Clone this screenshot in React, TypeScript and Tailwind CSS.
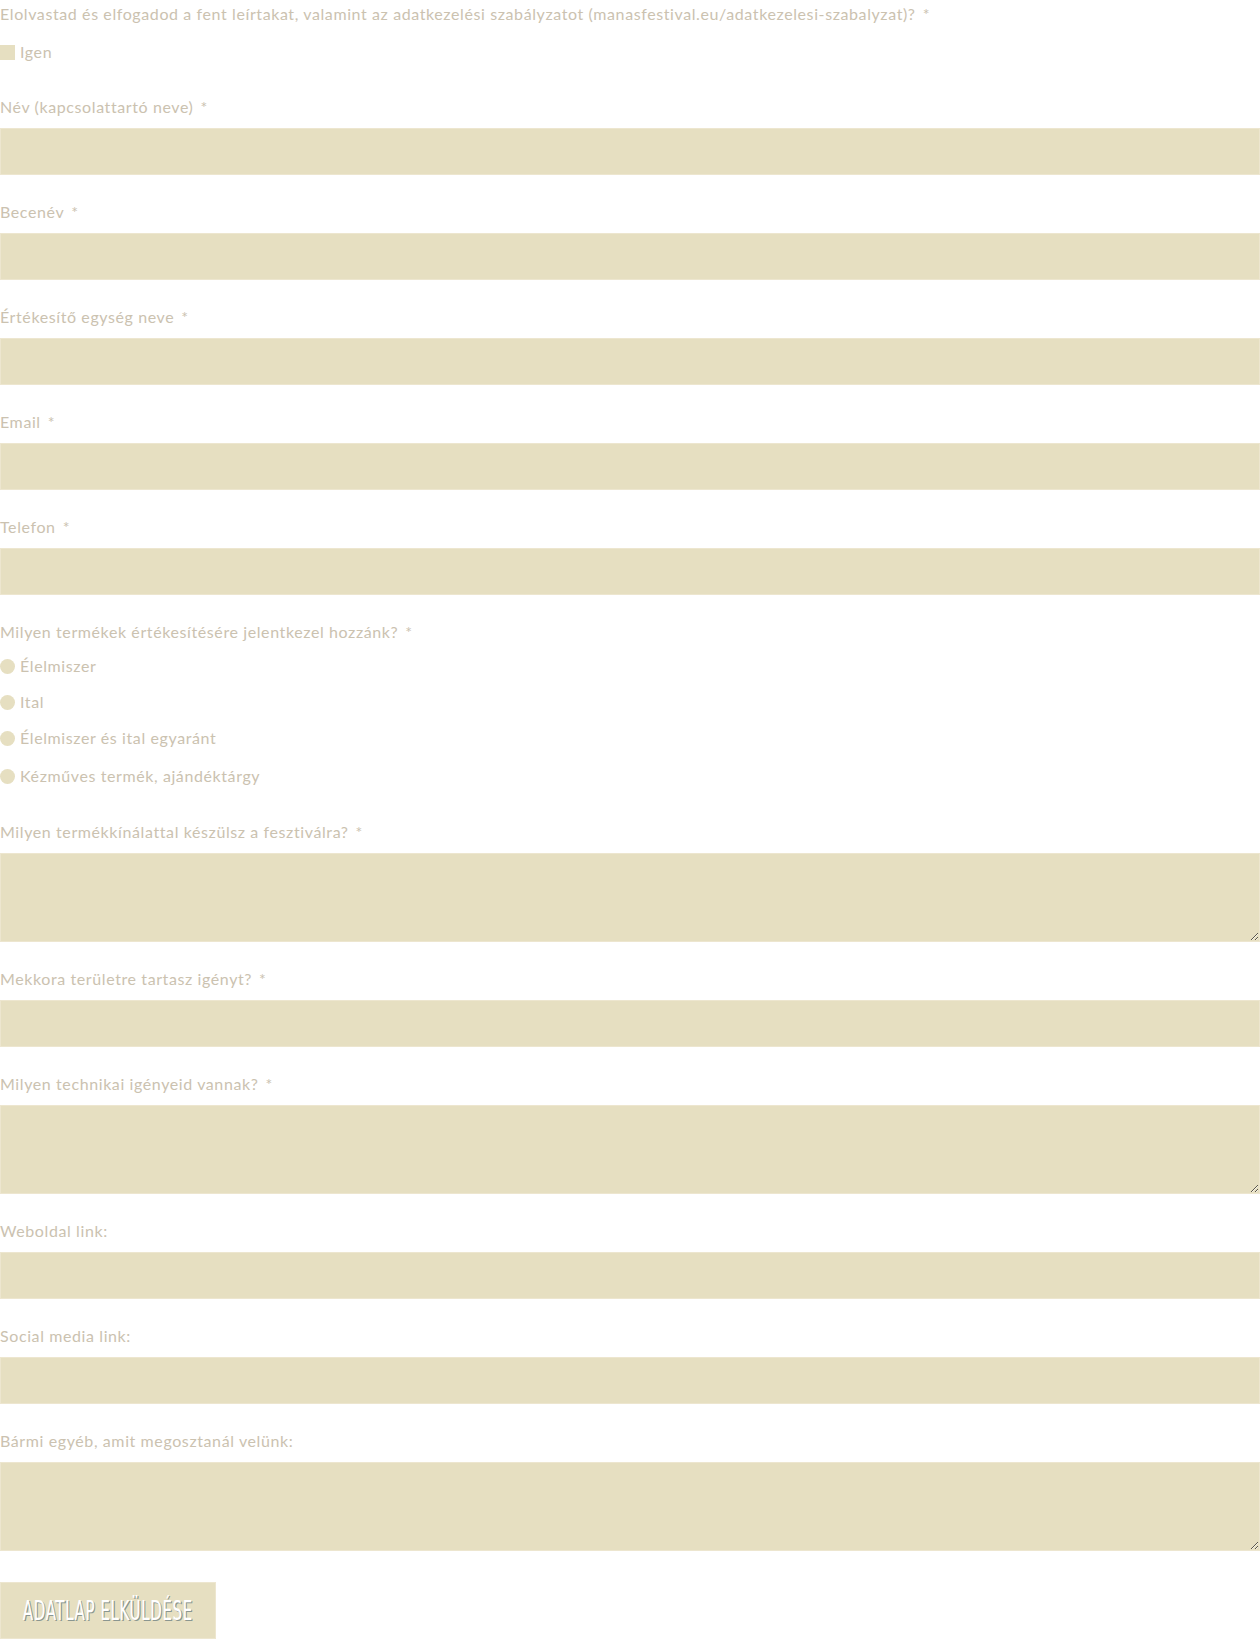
import React from "react";

const labelCls = "block h-[24px] leading-[24px] mb-[9px]";
const inputCls =
  "block w-full h-[47px] border border-[#ede6cf] bg-[#e6dfc1] outline-none";
const areaCls =
  "block w-full h-[89px] border border-[#ede6cf] bg-[#e6dfc1] outline-none";

function Req() {
  return <span className="ml-[7px]">*</span>;
}

function Field({
  label,
  required,
  area,
}: {
  label: string;
  required?: boolean;
  area?: boolean;
}) {
  return (
    <div className="mb-[25px]">
      <label className={labelCls}>
        {label}
        {required && <Req />}
      </label>
      {area ? <textarea className={areaCls} /> : <input className={inputCls} />}
    </div>
  );
}

const options = [
  "Élelmiszer",
  "Ital",
  "Élelmiszer és ital egyaránt",
  "Kézműves termék, ajándéktárgy",
];

export default function App() {
  return (
    <div
      className="w-[1260px] bg-white pt-[2px] text-[16px] tracking-[0.6px] text-[#cbc2b0]"
      style={{ fontFamily: "Lato, 'Open Sans', sans-serif" }}
    >
      <div className="h-[24px] leading-[24px] whitespace-nowrap">
        Elolvastad és elfogadod a fent leírtakat, valamint az adatkezelési
        szabályzatot (manasfestival.eu/adatkezelesi-szabalyzat)?
        <Req />
      </div>
      <div className="mt-[14px] flex h-[24px] items-center gap-[5px]">
        <span className="block h-[15px] w-[15px] bg-[#e6dfc1]" />
        <span>Igen</span>
      </div>

      <div className="mt-[31px]">
        <Field label="Név (kapcsolattartó neve)" required />
        <Field label="Becenév" required />
        <Field label="Értékesítő egység neve" required />
        <Field label="Email" required />
        <Field label="Telefon" required />

        <div className="mb-[32px]">
          <div className="h-[24px] leading-[24px]">
            Milyen termékek értékesítésére jelentkezel hozzánk?
            <Req />
          </div>
          <div className="mt-[10px] flex flex-col gap-[12px]">
            {options.map((o, i) => (
              <div
                key={o}
                className={
                  i === options.length - 1
                    ? "mt-[2px] flex h-[24px] items-center gap-[5px]"
                    : "flex h-[24px] items-center gap-[5px]"
                }
              >
                <span className="block h-[15px] w-[15px] rounded-full bg-[#e6dfc1]" />
                <span>{o}</span>
              </div>
            ))}
          </div>
        </div>

        <Field label="Milyen termékkínálattal készülsz a fesztiválra?" required area />
        <Field label="Mekkora területre tartasz igényt?" required />
        <Field label="Milyen technikai igényeid vannak?" required area />
        <Field label="Weboldal link:" />
        <Field label="Social media link:" />
        <Field label="Bármi egyéb, amit megosztanál velünk:" area />
      </div>

      <button className="mt-[31px] flex h-[57px] w-[216px] items-center justify-center overflow-hidden border border-[#ede6cf] bg-[#e6dfc1]">
        <span
          className="inline-block scale-x-[0.56] whitespace-nowrap text-[27px] leading-none tracking-[1px] text-white [text-shadow:2px_1px_0_#8a9690]"
          style={{ fontFamily: "'DejaVu Sans', sans-serif" }}
        >
          ADATLAP ELKÜLDÉSE
        </span>
      </button>
    </div>
  );
}
